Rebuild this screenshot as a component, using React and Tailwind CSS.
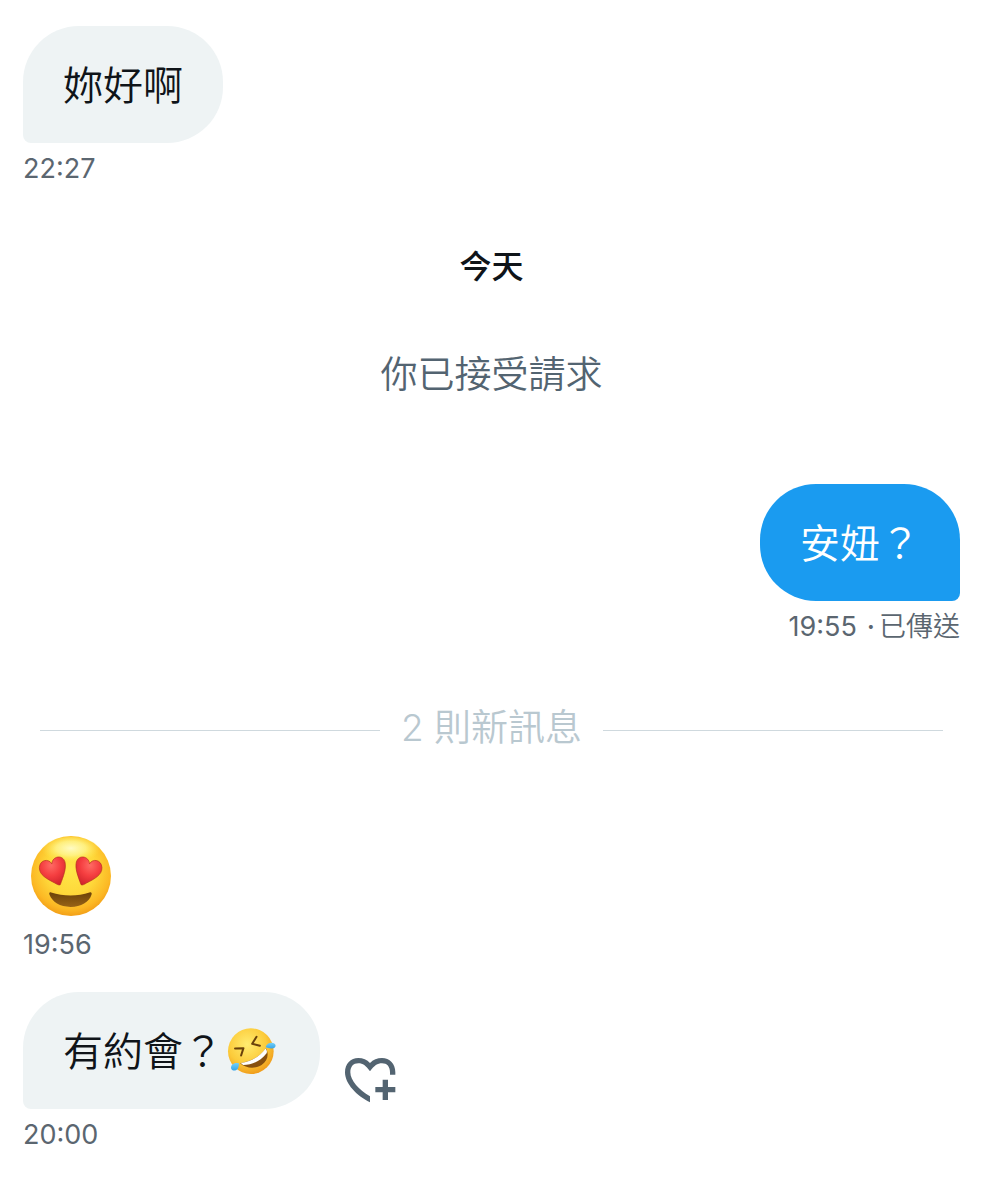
const HeartEyes = () => (
  <svg viewBox="64 49 238 238" className="ml-2 h-20 w-20" role="img" aria-label="heart eyes">
    <defs>
      <radialGradient id="face" cx="0.5" cy="0.42" r="0.62">
        <stop offset="0" stopColor="#ffe748" />
        <stop offset="0.5" stopColor="#fed83a" />
        <stop offset="0.8" stopColor="#fcb824" />
        <stop offset="1" stopColor="#ee9312" />
      </radialGradient>
      <radialGradient id="shine" cx="0.5" cy="0.4" r="0.5">
        <stop offset="0" stopColor="#fffbc4" />
        <stop offset="0.5" stopColor="#fff690" stopOpacity="0.8" />
        <stop offset="1" stopColor="#ffec50" stopOpacity="0" />
      </radialGradient>
      <radialGradient id="heart" cx="0.45" cy="0.3" r="0.75">
        <stop offset="0" stopColor="#ff6a64" />
        <stop offset="0.5" stopColor="#f53e40" />
        <stop offset="1" stopColor="#cf222b" />
      </radialGradient>
      <linearGradient id="mouth" x1="0" y1="0" x2="0" y2="1">
        <stop offset="0" stopColor="#6b4209" />
        <stop offset="1" stopColor="#986316" />
      </linearGradient>
      <path
        id="eye"
        d="M151 194C147 196 141 193 135 189C112 177 88 165 89 143C90 119 117 115 126 132C127 109 158 103 165 126C170 146 160 169 151 194Z"
      />
    </defs>
    <circle cx="183" cy="168" r="119" fill="url(#face)" />
    <ellipse cx="183" cy="94" rx="88" ry="42" fill="url(#shine)" />
    <use href="#eye" fill="url(#heart)" stroke="#b5301c" strokeWidth="2" />
    <use href="#eye" fill="url(#heart)" stroke="#b5301c" strokeWidth="2" transform="translate(364 0) scale(-1 1)" />
    <path
      d="M124 217C160 229 204 229 238 217C243 215 246 218 244 224C237 246 213 260 182 260C150 260 127 245 119 224C117 218 119 215 124 217Z"
      fill="url(#mouth)"
    />
  </svg>
);

const Rofl = () => (
  <svg viewBox="34 34 146 146" className="mx-1 size-[49px]" role="img" aria-label="rolling on the floor laughing">
    <defs>
      <radialGradient id="roflFace" cx="0.42" cy="0.35" r="0.7">
        <stop offset="0" stopColor="#ffec70" />
        <stop offset="0.6" stopColor="#fccb3a" />
        <stop offset="1" stopColor="#ee9617" />
      </radialGradient>
      <linearGradient id="tear" x1="0" y1="0" x2="0" y2="1">
        <stop offset="0" stopColor="#74d0f7" />
        <stop offset="1" stopColor="#36a5e8" />
      </linearGradient>
    </defs>
    <circle cx="105" cy="106" r="68" fill="url(#roflFace)" />
    <path d="M58 98L83 97L76 119" fill="none" stroke="#69410b" strokeWidth="6" strokeLinecap="round" strokeLinejoin="round" />
    <path d="M122 63L109 84L132 90" fill="none" stroke="#69410b" strokeWidth="6" strokeLinecap="round" strokeLinejoin="round" />
    <path d="M73 142C106 137 132 122 150 97C160 115 155 136 137 147C116 160 91 157 73 142Z" fill="#87500f" />
    <path d="M75 141C107 137 132 121 149 98C153 104 154 108 152 112C133 136 109 147 82 147Z" fill="#fff" />
    <path d="M149 94C153 80 169 78 176 84C183 91 176 99 166 98C160 97 155 95 149 94Z" fill="url(#tear)" />
    <path d="M70 143C56 138 45 147 46 157C48 165 59 166 65 160C69 155 69 149 70 143Z" fill="url(#tear)" />
  </svg>
);

const HeartPlus = () => (
  <svg viewBox="42 51 156 141" className="h-[47px] w-[52px]" fill="currentColor" aria-hidden="true">
    <path d="M120 187C80 167 45 132 45 97C45 71 62 54 85 54C99 54 111 59 120 69C129 59 142 54 156 54C179 54 196 71 196 97V104H180V97C180 80 171 70 156 70C142 70 133 77 120 94C107 77 99 70 85 70C70 70 61 80 61 97C61 122 87 150 120 169Z" />
    <path d="M158 119H174V141H196V157H174V180H158V157H136V141H158Z" />
  </svg>
);

function Stamp({ time, status }) {
  return (
    <p className="flex gap-1 text-[27px] leading-9 text-[#5b6670]">
      <time className="font-normal">{time}</time>
      {status && (
        <>
          <span className="ml-1.5 font-medium">·</span>
          <span>{status}</span>
        </>
      )}
    </p>
  );
}

function Bubble({ mine, children }) {
  const look = mine
    ? 'rounded-br-lg bg-[#1a9bf0] text-white'
    : 'rounded-bl-lg bg-[#eef3f4] text-[#0f1419]';

  return (
    <div className={`flex h-[117px] items-center rounded-[56px] px-10 pt-0.5 text-[40px] leading-[60px] ${look}`}>
      {children}
    </div>
  );
}

export default function App() {
  return (
    <main className="flex min-h-screen flex-col bg-white px-[23px] py-[26px] font-['Inter','Noto_Sans_CJK_TC',sans-serif] font-[350]">
      <article className="flex flex-col items-start gap-2">
        <Bubble>妳好啊</Bubble>
        <Stamp time="22:27" />
      </article>

      <h2 className="mt-14 text-center text-[32px] leading-[48px] font-medium text-[#0f1419]">今天</h2>
      <p className="mt-[60px] text-center text-[37px] leading-[48px] text-[#536471]">你已接受請求</p>

      <article className="mt-[85px] flex flex-col items-end gap-2">
        <Bubble mine>安妞？</Bubble>
        <Stamp time="19:55" status="已傳送" />
      </article>

      <div className="mt-[61px] flex items-center gap-[21px] px-[17px]">
        <span className="h-px flex-1 bg-[#cfd9de]" />
        <p className="pb-1 text-[37px] leading-[44px] text-[#b9c8d0]">2 則新訊息</p>
        <span className="h-px flex-1 bg-[#cfd9de]" />
      </div>

      <article className="mt-[82px] flex flex-col items-start gap-[11px]">
        <HeartEyes />
        <Stamp time="19:56" />
      </article>

      <article className="mt-[29px] flex flex-col items-start gap-2">
        <div className="flex items-end gap-6">
          <Bubble>
            有約會？
            <Rofl />
          </Bubble>
          <button type="button" aria-label="Add reaction" className="mb-[5px] text-[#536471]">
            <HeartPlus />
          </button>
        </div>
        <Stamp time="20:00" />
      </article>
    </main>
  );
}
